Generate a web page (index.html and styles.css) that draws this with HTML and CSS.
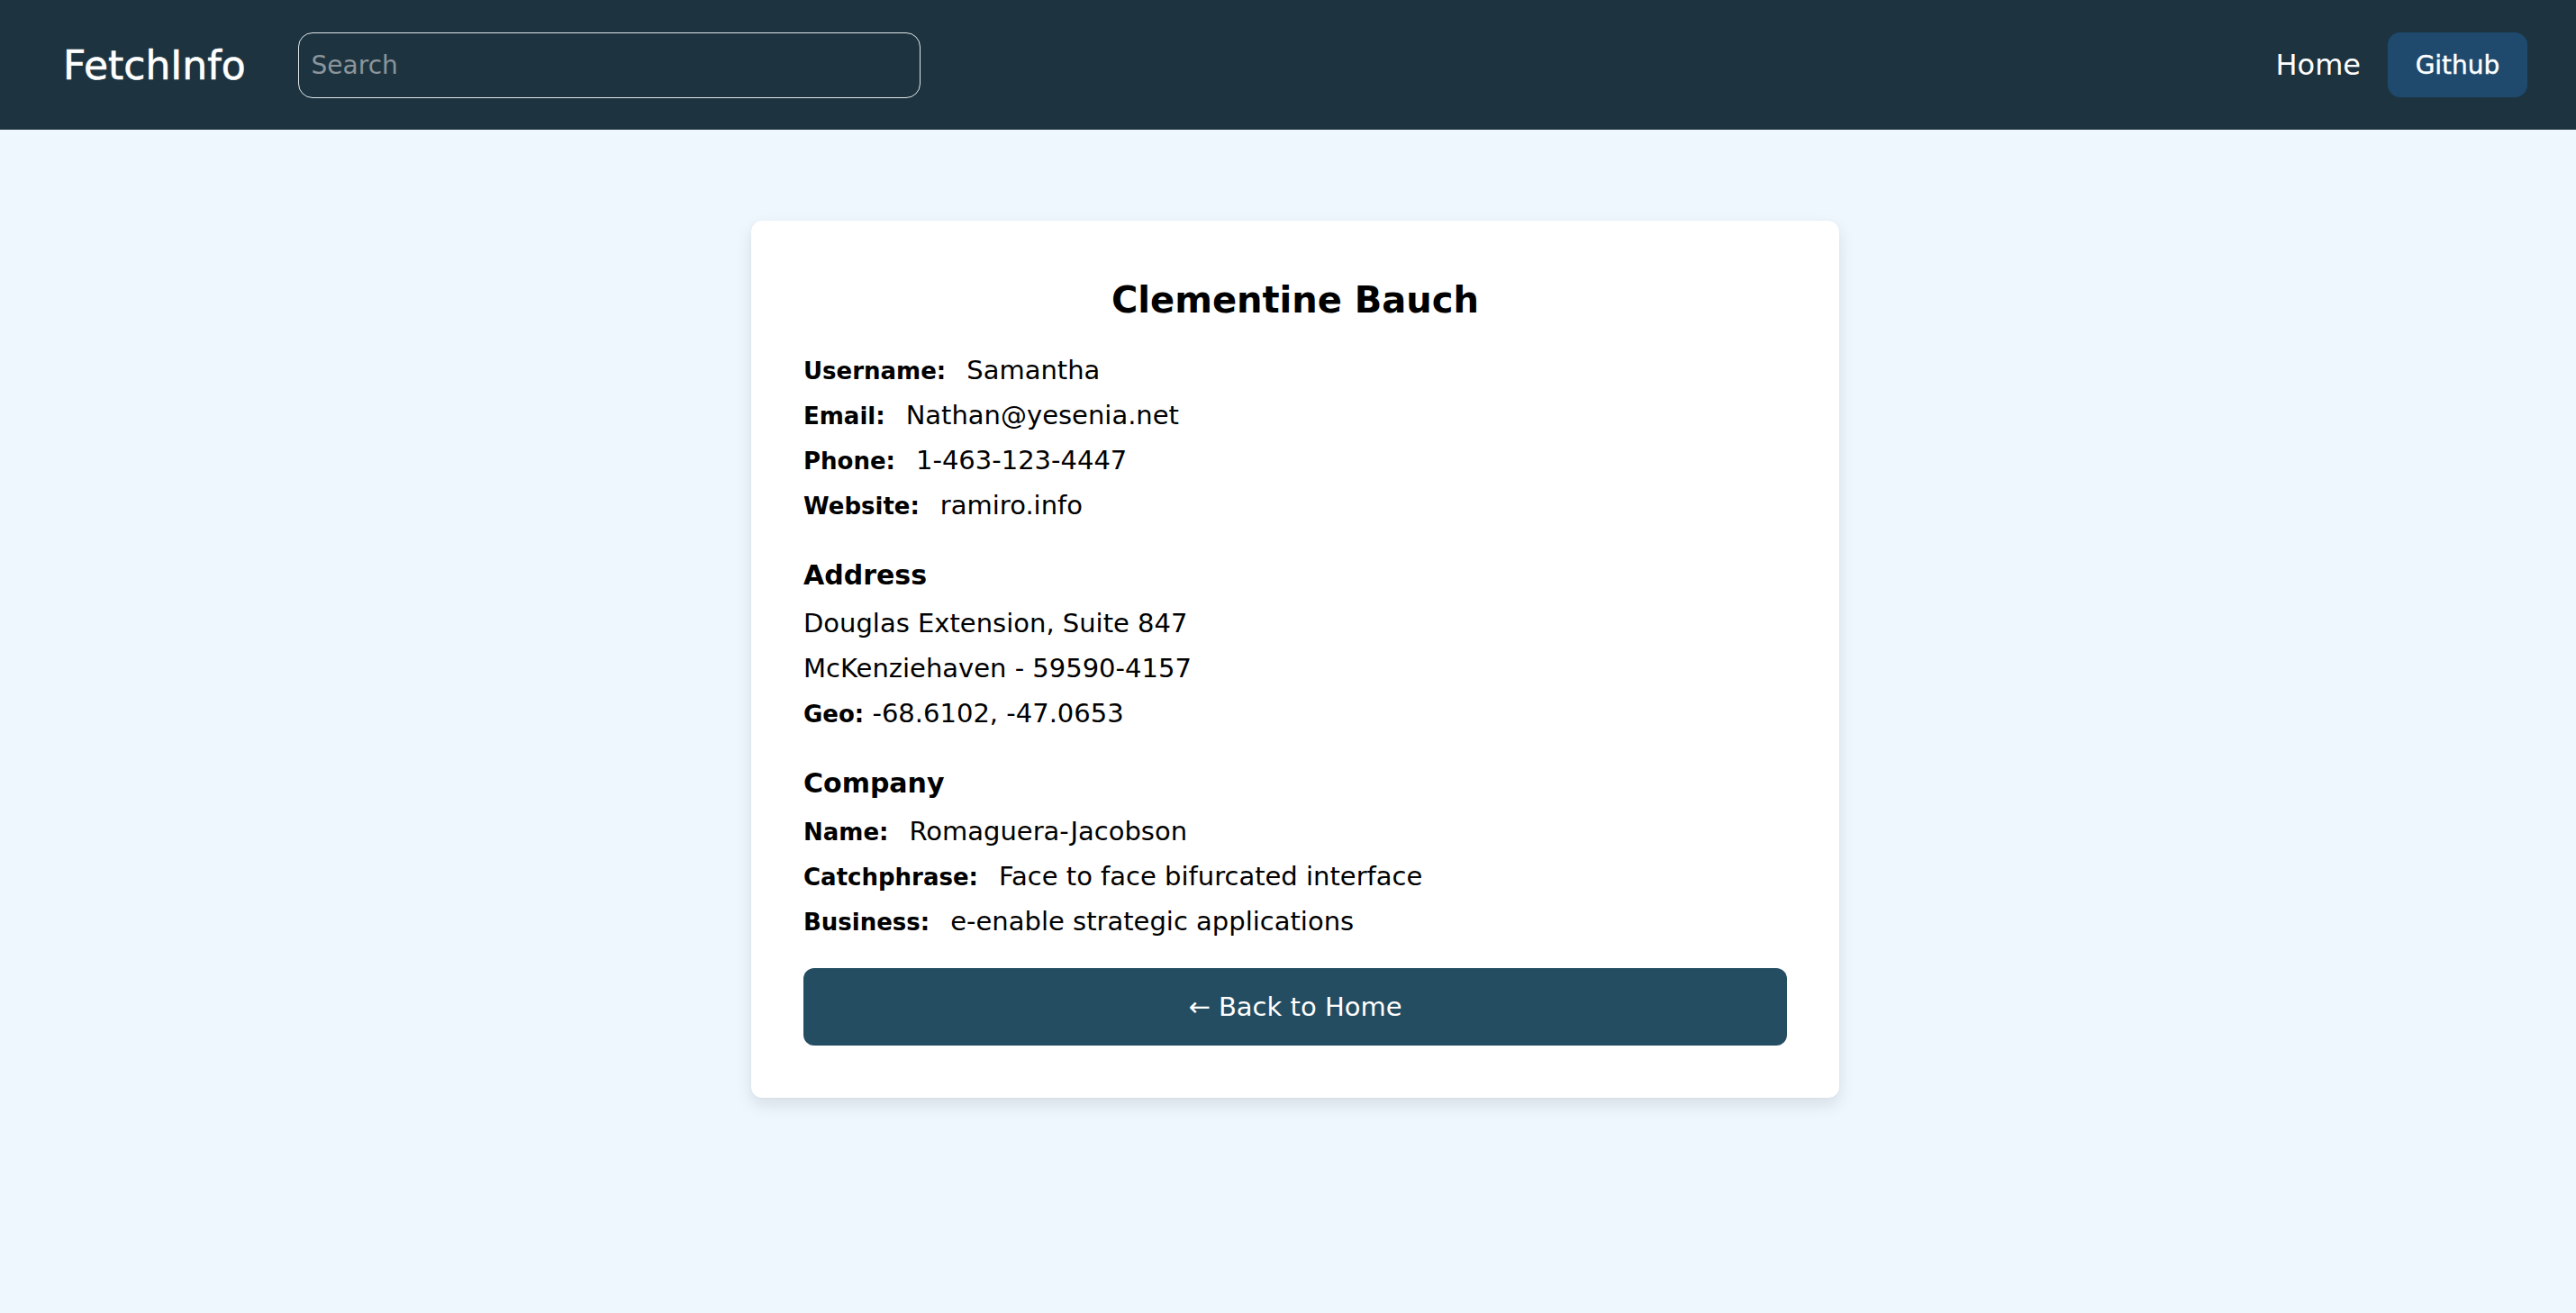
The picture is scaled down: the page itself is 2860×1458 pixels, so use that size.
FILE: index.html
```html
<!DOCTYPE html>
<html lang="en">
<head>
<meta charset="utf-8">
<title>FetchInfo</title>
<link rel="stylesheet" href="styles.css">
</head>
<body>
<header class="topbar">
  <div class="brand-group">
    <a class="brand" href="#">FetchInfo</a>
    <input class="search" type="text" placeholder="Search">
  </div>
  <nav class="nav">
    <a class="nav-link" href="#">Home</a>
    <a class="nav-btn" href="#">Github</a>
  </nav>
</header>
<main class="main">
  <section class="card">
    <h1 class="card-title">Clementine Bauch</h1>
    <div class="rows">
      <p class="row"><span class="label">Username:</span>Samantha</p>
      <p class="row"><span class="label">Email:</span>Nathan@yesenia.net</p>
      <p class="row"><span class="label">Phone:</span>1-463-123-4447</p>
      <p class="row"><span class="label">Website:</span>ramiro.info</p>
    </div>
    <h2 class="section-title">Address</h2>
    <div class="rows">
      <p class="row">Douglas Extension, Suite 847</p>
      <p class="row">McKenziehaven - 59590-4157</p>
      <p class="row"><span class="label-tight">Geo:</span> -68.6102, -47.0653</p>
    </div>
    <h2 class="section-title">Company</h2>
    <div class="rows">
      <p class="row"><span class="label">Name:</span>Romaguera-Jacobson</p>
      <p class="row"><span class="label">Catchphrase:</span>Face to face bifurcated interface</p>
      <p class="row"><span class="label">Business:</span>e-enable strategic applications</p>
    </div>
    <a class="back-btn" href="#">← Back to Home</a>
  </section>
</main>
</body>
</html>
```

FILE: styles.css
```css
* { box-sizing: border-box; }

html, body {
  margin: 0;
  padding: 0;
}

body {
  font-family: "DejaVu Sans", "Open Sans", sans-serif;
  background: #eff7fe;
  color: #000;
  min-height: 100vh;
}

a { text-decoration: none; }

.topbar {
  height: 144px;
  background: #1d3440;
  display: flex;
  align-items: center;
  justify-content: space-between;
  padding: 0 54px 0 70px;
}

.brand-group {
  display: flex;
  align-items: center;
  gap: 58px;
}

.brand {
  color: #ffffff;
  font-size: 44px;
  font-weight: 400;
  -webkit-text-stroke: 0.6px #ffffff;
}

.search {
  width: 691px;
  height: 73px;
  background: transparent;
  border: 1.5px solid #dfe5e8;
  border-radius: 16px;
  padding: 0 14px;
  font-family: inherit;
  font-size: 28px;
  color: #fff;
  outline: none;
}

.search::placeholder {
  color: #8b959b;
}

.nav {
  display: flex;
  align-items: center;
  gap: 30px;
}

.nav-link {
  color: #ffffff;
  font-size: 32px;
}

.nav-btn {
  display: flex;
  align-items: center;
  justify-content: center;
  width: 155px;
  height: 72px;
  border-radius: 14px;
  background: #1f4a6e;
  color: #ffffff;
  font-size: 28px;
  -webkit-text-stroke: 0.4px #ffffff;
}

.main {
  display: flex;
  justify-content: center;
  padding: 101px 0 0 16px;
}

.card {
  width: 1208px;
  background: #ffffff;
  border-radius: 12px;
  padding: 58px;
  box-shadow: 0 0 2px rgba(0, 0, 0, 0.06), 0 8px 18px rgba(0, 0, 0, 0.10);
}

.card-title {
  margin: 6px 0 29px;
  text-align: center;
  font-size: 40px;
  line-height: 48px;
  font-weight: 700;
}

.rows {
  display: flex;
  flex-direction: column;
}

.row {
  margin: 0;
  font-size: 29px;
  line-height: 50px;
  white-space: nowrap;
}

.label {
  font-weight: 700;
  font-size: 26px;
  line-height: 1;
  margin-right: 23px;
}

.label-tight {
  font-weight: 700;
  font-size: 26px;
  line-height: 1;
}

.section-title {
  margin: 33px 0 8px;
  font-size: 30px;
  line-height: 40px;
  font-weight: 700;
}

.back-btn {
  margin-top: 27px;
  display: flex;
  align-items: center;
  justify-content: center;
  height: 86px;
  border-radius: 12px;
  background: #244d62;
  color: #ffffff;
  font-size: 29px;
}
```
